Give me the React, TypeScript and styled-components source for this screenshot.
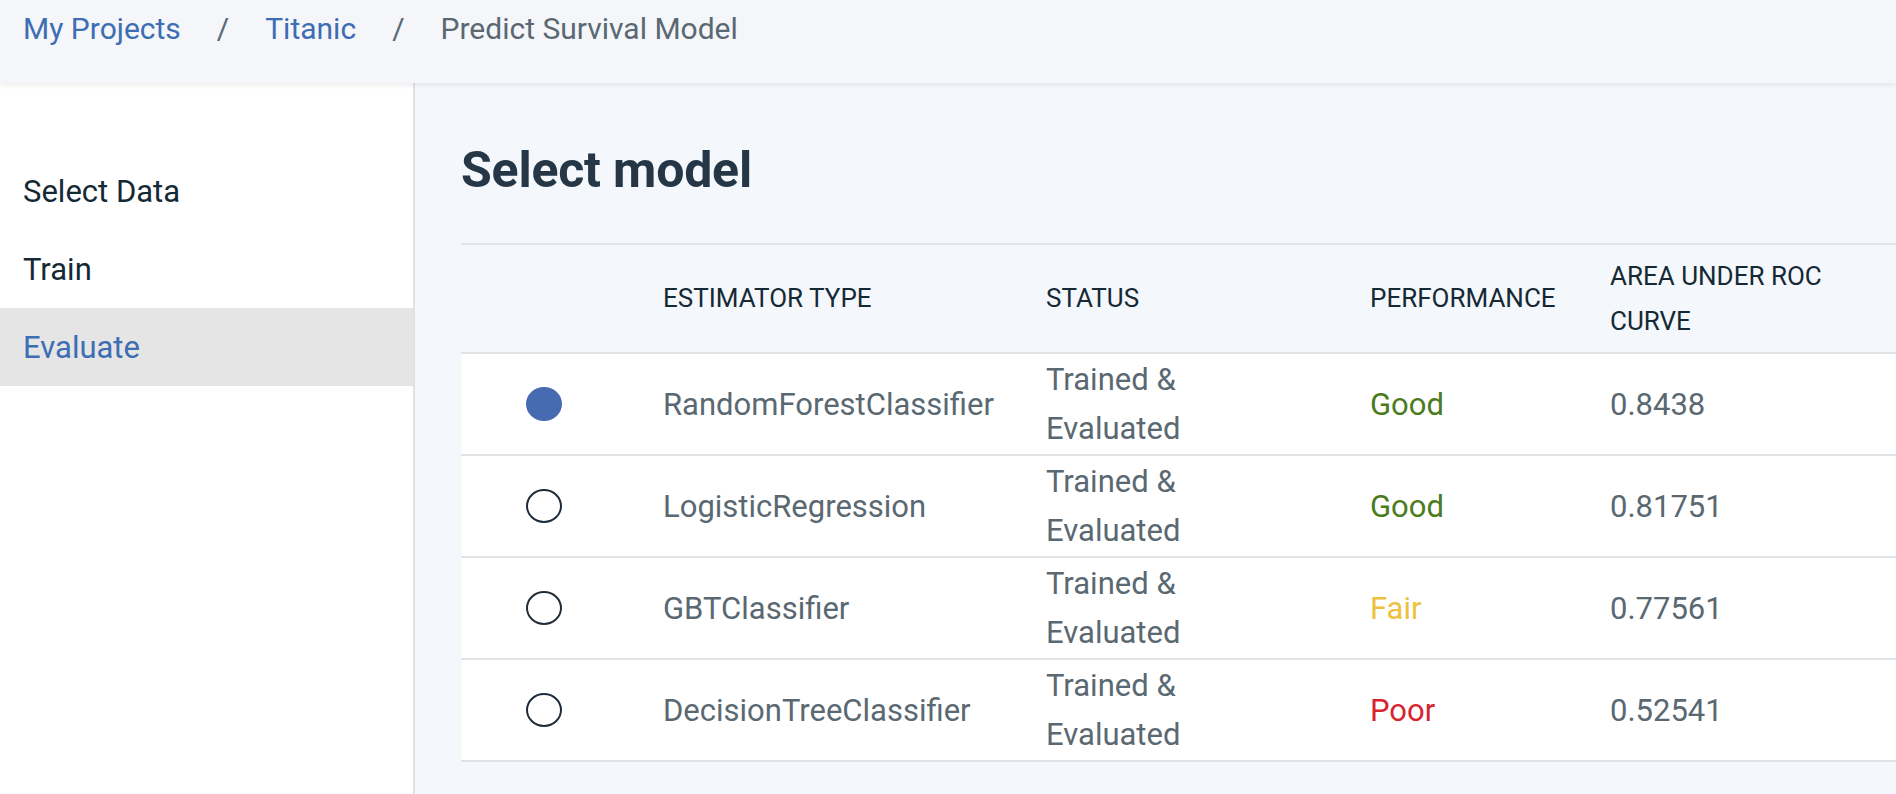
import React from "react";
import styled, { createGlobalStyle } from "styled-components";

const Global = createGlobalStyle`
  html, body { margin: 0; padding: 0; }
  body {
    background: #f4f7fb;
    font-family: Roboto, "Noto Sans", "Liberation Sans", sans-serif;
    -webkit-font-smoothing: antialiased;
  }
`;

const Page = styled.div`
  display: flex;
  flex-direction: column;
  min-height: 794px;
  background: #f4f7fb;
`;

const Header = styled.header`
  height: 83px;
  box-sizing: border-box;
  padding: 9px 0 0 23px;
  background: #f4f6fa;
  box-shadow: 0 2px 6px rgba(0, 0, 0, 0.08);
  position: relative;
  z-index: 1;
`;

const Crumbs = styled.nav`
  display: flex;
  align-items: center;
  gap: 36px;
  font-size: 30px;
  line-height: 40px;
`;

const Crumb = styled.span<{ $link?: boolean }>`
  color: ${(p) => (p.$link ? "#3d6db2" : "#5a6872")};
`;

const Sep = styled.span`
  color: #5a6872;
`;

const Body = styled.div`
  flex: 1;
  display: flex;
`;

const Sidebar = styled.aside`
  width: 413px;
  flex: none;
  background: #ffffff;
  border-right: 2px solid #dfe3e6;
  padding-top: 69px;
  display: flex;
  flex-direction: column;
`;

const NavItem = styled.div<{ $active?: boolean }>`
  height: 78px;
  display: flex;
  align-items: center;
  padding-left: 23px;
  font-size: 31px;
  color: ${(p) => (p.$active ? "#3d6db2" : "#152935")};
  background: ${(p) => (p.$active ? "#e5e5e5" : "transparent")};
`;

const Main = styled.main`
  flex: 1;
  padding: 58px 0 0 46px;
  display: flex;
  flex-direction: column;
`;

const Title = styled.h1`
  margin: 0;
  font-size: 50px;
  line-height: 58px;
  font-weight: 700;
  color: #253746;
  letter-spacing: -0.2px;
`;

const Table = styled.div`
  margin-top: 44px;
  border-top: 2px solid #dfe3e6;
  display: flex;
  flex-direction: column;
`;

const Row = styled.div<{ $head?: boolean }>`
  display: grid;
  grid-template-columns: 174px 383px 324px 240px 1fr;
  align-items: center;
  min-height: ${(p) => (p.$head ? "107px" : "100px")};
  background: ${(p) => (p.$head ? "#f4f7fb" : "#ffffff")};
  border-bottom: 2px solid #dfe3e6;
`;

const HeadCell = styled.div<{ $wrap?: number }>`
  padding: 0 28px;
  font-size: 26px;
  line-height: 45px;
  color: #152935;
  text-transform: uppercase;
  max-width: ${(p) => (p.$wrap ? `${p.$wrap}px` : "none")};
`;

const RadioCell = styled.div`
  display: flex;
  justify-content: center;
  align-items: center;
  padding-right: 8px;
`;

const Radio = styled.div<{ $checked?: boolean }>`
  width: 36px;
  height: 34px;
  box-sizing: border-box;
  border-radius: 50%;
  background: ${(p) => (p.$checked ? "#466bb0" : "#ffffff")};
  border: ${(p) => (p.$checked ? "none" : "2.5px solid #1e2b38")};
`;

const Cell = styled.div<{ $color?: string }>`
  padding: 0 28px;
  font-size: 31px;
  line-height: 49px;
  color: ${(p) => p.$color || "#5a6872"};
`;

const StatusText = styled.div`
  max-width: 200px;
`;

const perfColor: Record<string, string> = {
  Good: "#4b7c1c",
  Fair: "#ecc13e",
  Poor: "#d9232f",
};

const models = [
  { name: "RandomForestClassifier", perf: "Good", auc: "0.8438", checked: true },
  { name: "LogisticRegression", perf: "Good", auc: "0.81751" },
  { name: "GBTClassifier", perf: "Fair", auc: "0.77561" },
  { name: "DecisionTreeClassifier", perf: "Poor", auc: "0.52541" },
];

export default function App() {
  return (
    <Page>
      <Global />
      <Header>
        <Crumbs>
          <Crumb $link>My Projects</Crumb>
          <Sep>/</Sep>
          <Crumb $link>Titanic</Crumb>
          <Sep>/</Sep>
          <Crumb>Predict Survival Model</Crumb>
        </Crumbs>
      </Header>
      <Body>
        <Sidebar>
          <NavItem>Select Data</NavItem>
          <NavItem>Train</NavItem>
          <NavItem $active>Evaluate</NavItem>
        </Sidebar>
        <Main>
          <Title>Select model</Title>
          <Table>
            <Row $head>
              <div />
              <HeadCell>Estimator Type</HeadCell>
              <HeadCell>Status</HeadCell>
              <HeadCell>Performance</HeadCell>
              <HeadCell $wrap={290}>Area under ROC curve</HeadCell>
            </Row>
            {models.map((m) => (
              <Row key={m.name}>
                <RadioCell>
                  <Radio $checked={m.checked} />
                </RadioCell>
                <Cell>{m.name}</Cell>
                <Cell>
                  <StatusText>Trained &amp; Evaluated</StatusText>
                </Cell>
                <Cell $color={perfColor[m.perf]}>{m.perf}</Cell>
                <Cell>{m.auc}</Cell>
              </Row>
            ))}
          </Table>
        </Main>
      </Body>
    </Page>
  );
}
